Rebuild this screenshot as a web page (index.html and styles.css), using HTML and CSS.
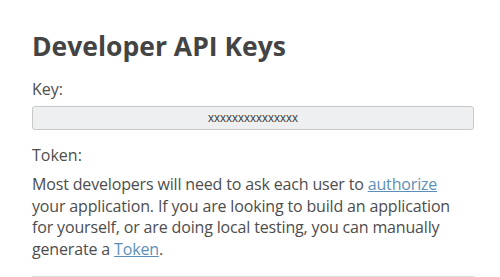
FILE: index.html
```html
<!DOCTYPE html>
<html>
<head>
<meta charset="utf-8">
<link rel="stylesheet" href="styles.css">
</head>
<body>
<main class="page">
  <h1 class="title">Developer API Keys</h1>
  <label class="label">Key:</label>
  <div class="key-box">xxxxxxxxxxxxxxx</div>
  <label class="label token-label">Token:</label>
  <p class="desc">Most developers will need to ask each user to <a href="#">authorize</a> your application. If you are looking to build an application for yourself, or are doing local testing, you can manually generate a <a href="#">Token</a>.</p>
  <hr class="rule">
</main>
</body>
</html>
```
FILE: styles.css
```css
html, body { margin: 0; padding: 0; background: #fff; }
body { font-family: "Open Sans", "Noto Sans", sans-serif; color: #4d4d4d; }
.page { padding: 24px 26px 0 32px; display: flex; flex-direction: column; }
.title { margin: 0; font-size: 26.5px; font-weight: 700; line-height: 44px; color: #444; letter-spacing: 0; }
.label { display: block; font-size: 16px; line-height: 20px; margin-top: 11px; }
.key-box { margin-top: 7px; height: 22px; border: 1px solid #c8c8c8; border-radius: 3px; background: #edeff0; font-family: "Liberation Sans", sans-serif; font-size: 12px; line-height: 22px; text-align: center; color: #444; }
.token-label { margin-top: 15px; }
.desc { margin: 9px 0 0; max-width: 430px; font-size: 16px; letter-spacing: -0.16px; line-height: 21.6px; }
.desc a { color: #5e8fb8; text-decoration: underline; }
.rule { margin: 16px 0 0; border: 0; border-top: 1px solid #ddd; }
```
